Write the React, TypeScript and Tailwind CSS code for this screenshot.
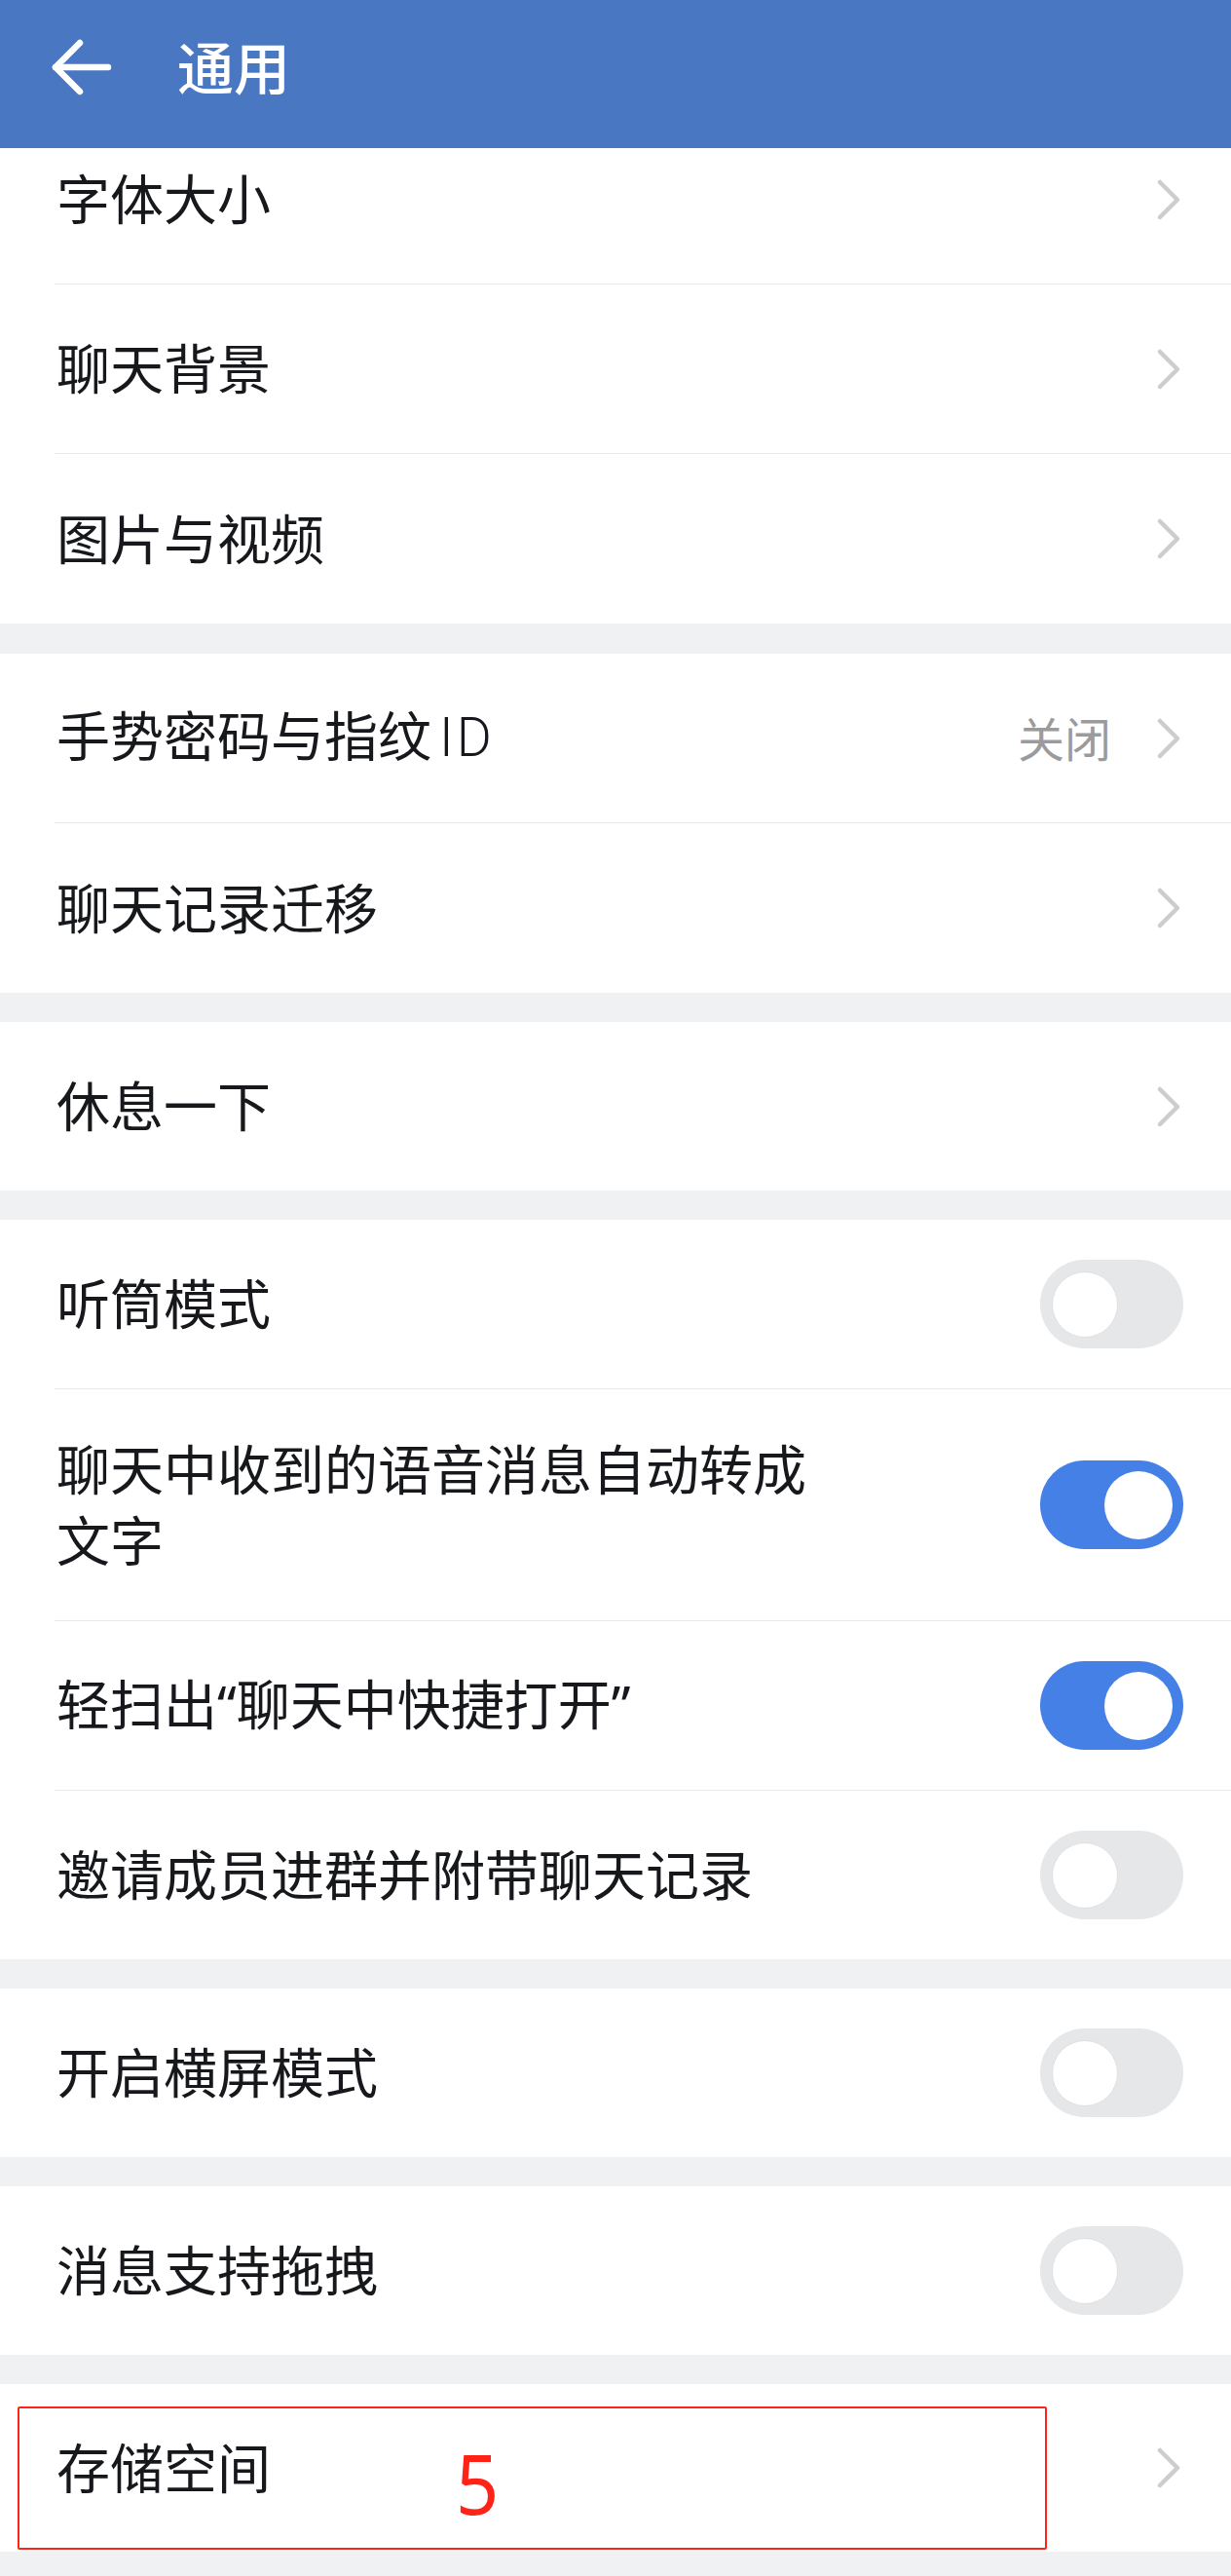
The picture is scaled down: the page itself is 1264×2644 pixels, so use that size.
import React from "react";

const FONT = { fontFamily: '"Noto Sans CJK SC", "Noto Sans", sans-serif' };
const LATIN = { fontFamily: '"Noto Sans", "Noto Sans CJK SC", sans-serif' };
const ID_FONT = { fontFamily: 'Roboto, "Noto Sans", sans-serif' };

function Chevron() {
  return (
    <svg width="28" height="44" viewBox="0 0 28 44" className="shrink-0">
      <path d="M4 4 L22 22 L4 40" fill="none" stroke="#cdcdcf" strokeWidth="4.5" strokeLinecap="round" strokeLinejoin="round" />
    </svg>
  );
}

function Toggle({ on }: { on: boolean }) {
  return on ? (
    <div className="shrink-0 w-[147px] h-[91px] rounded-full bg-[#4580e6] flex items-center justify-end pr-[11px]">
      <div className="w-[70px] h-[70px] rounded-full bg-white" />
    </div>
  ) : (
    <div className="shrink-0 w-[147px] h-[91px] rounded-full bg-[#e6e7e9] flex items-center pl-[12px]">
      <div className="w-[68px] h-[68px] rounded-full bg-white border border-[#e0e0e2]" />
    </div>
  );
}

type RowProps = {
  text: React.ReactNode;
  h: string;
  divider?: boolean;
  value?: string;
  toggle?: boolean;
  on?: boolean;
  extra?: string;
  multi?: boolean;
};

function Row({ text, h, divider, value, toggle, on, extra, multi }: RowProps) {
  return (
    <div className={`bg-white pl-[56px] ${h}`}>
      <div
        className={`h-full flex items-center justify-between pl-[2px] pr-[49px] ${divider ? "border-b border-[#e9eaec]" : ""} ${extra ?? ""}`}
      >
        <div
          className={`text-[55px] text-[#16181c] -translate-y-[3px] ${multi ? "leading-[73px] w-[800px]" : "leading-none whitespace-nowrap"}`}
        >
          {text}
        </div>
        <div className="flex items-center gap-[46px]">
          {value && <span className="text-[48px] leading-none text-[#9b9b9d] -translate-y-[2px]">{value}</span>}
          {toggle ? <Toggle on={!!on} /> : <Chevron />}
        </div>
      </div>
    </div>
  );
}

export default function App() {
  return (
    <div className="w-[1264px] min-h-[2644px] bg-[#f0f1f3]" style={FONT}>
      <div className="h-[152px] bg-[#4a77c1] flex items-center pb-[14px]">
        <svg width="64" height="58" viewBox="0 0 64 58" className="ml-[52px]">
          <path d="M5 29 H59" fill="none" stroke="#ffffff" strokeWidth="6.5" strokeLinecap="round" />
          <path d="M30 4 L5 29 L30 54" fill="none" stroke="#ffffff" strokeWidth="6.5" strokeLinecap="round" strokeLinejoin="round" />
        </svg>
        <div className="ml-[66px] text-[58px] leading-none font-medium text-white -translate-y-[2px]">通用</div>
      </div>

      <Row text="字体大小" h="h-[140px]" divider extra="pb-[34px]" />
      <Row text="聊天背景" h="h-[174px]" divider />
      <Row text="图片与视频" h="h-[174px]" />

      <div className="h-[31px]" />
      <Row
        text={
          <>
            手势密码与指纹
            <span className="ml-[8px] font-light tracking-[3px]" style={ID_FONT}>
              ID
            </span>
          </>
        }
        h="h-[174px]"
        divider
        value="关闭"
      />
      <Row text="聊天记录迁移" h="h-[174px]" />

      <div className="h-[30px]" />
      <Row text="休息一下" h="h-[173px]" />

      <div className="h-[30px]" />
      <Row text="听筒模式" h="h-[174px]" divider toggle on={false} />
      <Row text="聊天中收到的语音消息自动转成文字" h="h-[238px]" divider toggle on multi />
      <Row
        text={
          <>
            轻扫出<span style={LATIN}>“</span>聊天中快捷打开<span style={LATIN}>”</span>
          </>
        }
        h="h-[174px]"
        divider
        toggle
        on
      />
      <Row text="邀请成员进群并附带聊天记录" h="h-[173px]" toggle on={false} />

      <div className="h-[30px]" />
      <Row text="开启横屏模式" h="h-[173px]" toggle on={false} />

      <div className="h-[30px]" />
      <Row text="消息支持拖拽" h="h-[173px]" toggle on={false} />

      <div className="h-[30px]" />
      <div className="relative">
        <Row text="存储空间" h="h-[172px]" />
        <div className="absolute left-[18px] top-[23px] w-[1057px] h-[147px] border-2 border-[#ff2216] rounded-[2px]">
          <div
            className="absolute left-[448px] top-[33px] text-[86px] leading-none text-[#ff2216] scale-x-90 origin-left"
            style={{ fontFamily: '"Noto Sans", sans-serif' }}
          >
            5
          </div>
        </div>
      </div>
    </div>
  );
}
